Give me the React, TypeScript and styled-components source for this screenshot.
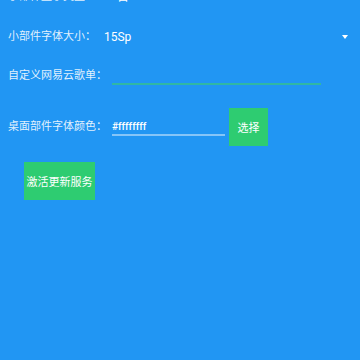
import React from "react";
import styled, { createGlobalStyle } from "styled-components";

const Global = createGlobalStyle`
  html, body { margin: 0; padding: 0; background: #2196F3; }
  body { font-family: Roboto, "Noto Sans CJK SC", sans-serif; }
`;

const Screen = styled.div`
  width: 360px;
  height: 360px;
  overflow: hidden;
  background: #2196F3;
  color: #fff;
`;

const Content = styled.div`
  display: flex;
  flex-direction: column;
  margin-top: -22px;
  padding-left: 8px;
`;

const SpinnerRow = styled.div<{ $h: number }>`
  display: flex;
  align-items: center;
  height: ${(p) => p.$h}px;
  padding-right: 12px;
`;

const Label = styled.span`
  font-family: Roboto, "Noto Sans CJK SC", sans-serif;
  font-size: 11px;
  line-height: 14px;
  color: rgba(255, 255, 255, 0.88);
  white-space: nowrap;
`;

const Value = styled.span<{ $ml: number }>`
  font-family: Roboto, "Noto Sans CJK SC", sans-serif;
  font-size: 12px;
  line-height: 14px;
  color: #fff;
  margin-left: ${(p) => p.$ml}px;
  flex: 1;
`;

const Arrow = styled.span`
  width: 0;
  height: 0;
  border-left: 3.5px solid transparent;
  border-right: 3.5px solid transparent;
  border-top: 4px solid #fff;
`;

const InputRow = styled.div<{ $h: number }>`
  display: flex;
  align-items: center;
  height: ${(p) => p.$h}px;
`;

const Field = styled.div<{ $w: number; $line: string }>`
  width: ${(p) => p.$w}px;
  margin-left: 5px;
  height: 18px;
  display: flex;
  align-items: center;
  border-bottom: 2px solid ${(p) => p.$line};
  font-family: Roboto, sans-serif;
  font-size: 10px;
  font-weight: 500;
  color: #fff;
  box-sizing: border-box;
`;

const GreenButton = styled.button<{ $w: number; $ml?: number }>`
  width: ${(p) => p.$w}px;
  height: 38px;
  margin-left: ${(p) => p.$ml ?? 0}px;
  border: none;
  padding: 0;
  background: #2ECC71;
  color: #fff;
  font-family: "Noto Sans CJK SC", sans-serif;
  font-size: 11px;
  display: flex;
  align-items: center;
  justify-content: center;
`;

const ActionRow = styled.div`
  display: flex;
  padding-left: 16px;
  margin-top: 3px;
`;

export default function App() {
  return (
    <Screen>
      <Global />
      <Content>
        <SpinnerRow $h={38}>
          <Label>小部件显示类型：</Label>
          <Value $ml={21}>否</Value>
          <Arrow />
        </SpinnerRow>
        <SpinnerRow $h={41}>
          <Label>小部件字体大小：</Label>
          <Value $ml={8}>15Sp</Value>
          <Arrow />
        </SpinnerRow>
        <InputRow $h={38}>
          <Label>自定义网易云歌单：</Label>
          <Field $w={209} $line="#30B7A4" />
        </InputRow>
        <InputRow $h={64}>
          <Label>桌面部件字体颜色：</Label>
          <Field $w={113} $line="rgba(255,255,255,0.45)">#ffffffff</Field>
          <GreenButton $w={39} $ml={4}>选择</GreenButton>
        </InputRow>
        <ActionRow>
          <GreenButton $w={71}>激活更新服务</GreenButton>
        </ActionRow>
      </Content>
    </Screen>
  );
}
